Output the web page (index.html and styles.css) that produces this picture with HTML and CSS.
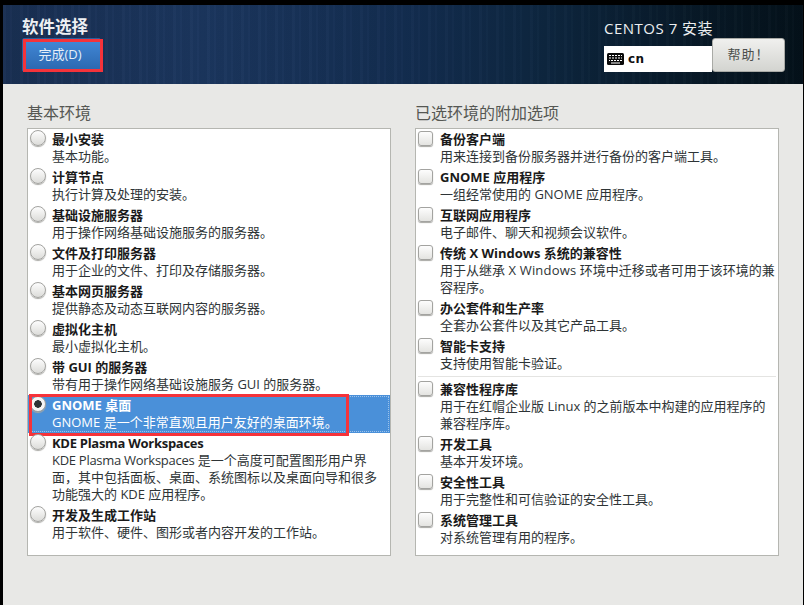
FILE: index.html
```html
<!DOCTYPE html>
<html lang="zh-CN">
<head>
<meta charset="utf-8">
<title>软件选择</title>
<link rel="stylesheet" href="styles.css">
</head>
<body>
<div class="frame">
  <header class="topbar">
    <div class="top-left">
      <h1 class="spoke-title">软件选择</h1>
      <div class="done-wrap">
        <button class="done">完成(D)</button>
        <span class="done-mark"></span>
      </div>
    </div>
    <div class="top-right">
      <div class="product">CENTOS 7 安装</div>
      <div class="top-controls">
        <div class="layout">
          <svg class="kbd" viewBox="0 0 17 12" width="17" height="12"><rect width="17" height="12" rx="1.5" fill="#0a0a0a"/><g fill="#fff"><rect x="2" y="2" width="2" height="1"/><rect x="5" y="2" width="2" height="1"/><rect x="8" y="2" width="2" height="1"/><rect x="11" y="2" width="2" height="1"/><rect x="14" y="2" width="1" height="1"/><rect x="2" y="4.5" width="2" height="1"/><rect x="5" y="4.5" width="2" height="1"/><rect x="8" y="4.5" width="2" height="1"/><rect x="11" y="4.5" width="2" height="1"/><rect x="14" y="4.5" width="1" height="1"/><rect x="2" y="7" width="1" height="1"/><rect x="4" y="7" width="2" height="1"/><rect x="7" y="7" width="2" height="1"/><rect x="10" y="7" width="2" height="1"/><rect x="13" y="7" width="2" height="1"/><rect x="4" y="9.5" width="9" height="1"/></g></svg>
          <span>cn</span>
        </div>
        <button class="help">帮助！</button>
      </div>
    </div>
  </header>
  <main class="content">
    <section class="column">
      <h2 class="col-title">基本环境</h2>
      <div class="panel">
        <div class="row"><span class="radio"></span><div class="text"><div class="name">最小安装</div><div class="desc">基本功能。</div></div></div>
        <div class="row"><span class="radio"></span><div class="text"><div class="name">计算节点</div><div class="desc">执行计算及处理的安装。</div></div></div>
        <div class="row"><span class="radio"></span><div class="text"><div class="name">基础设施服务器</div><div class="desc">用于操作网络基础设施服务的服务器。</div></div></div>
        <div class="row"><span class="radio"></span><div class="text"><div class="name">文件及打印服务器</div><div class="desc">用于企业的文件、打印及存储服务器。</div></div></div>
        <div class="row"><span class="radio"></span><div class="text"><div class="name">基本网页服务器</div><div class="desc">提供静态及动态互联网内容的服务器。</div></div></div>
        <div class="row"><span class="radio"></span><div class="text"><div class="name">虚拟化主机</div><div class="desc">最小虚拟化主机。</div></div></div>
        <div class="row"><span class="radio"></span><div class="text"><div class="name">带 GUI 的服务器</div><div class="desc">带有用于操作网络基础设施服务 GUI 的服务器。</div></div></div>
        <div class="row selected"><span class="radio checked"></span><div class="text"><div class="name">GNOME 桌面</div><div class="desc">GNOME 是一个非常直观且用户友好的桌面环境。</div></div><span class="focus-mark"></span></div>
        <div class="row"><span class="radio"></span><div class="text"><div class="name"><span class="tight">KDE Plasma Workspaces</span></div><div class="desc"><span class="tight">KDE Plasma Workspaces</span> 是一个高度可配置图形用户界<br>面，其中包括面板、桌面、系统图标以及桌面向导和很多<br>功能强大的 KDE 应用程序。</div></div></div>
        <div class="row"><span class="radio"></span><div class="text"><div class="name">开发及生成工作站</div><div class="desc">用于软件、硬件、图形或者内容开发的工作站。</div></div></div>
      </div>
    </section>
    <section class="column">
      <h2 class="col-title">已选环境的附加选项</h2>
      <div class="panel">
        <div class="row"><span class="check"></span><div class="text"><div class="name">备份客户端</div><div class="desc">用来连接到备份服务器并进行备份的客户端工具。</div></div></div>
        <div class="row"><span class="check"></span><div class="text"><div class="name">GNOME 应用程序</div><div class="desc">一组经常使用的 GNOME 应用程序。</div></div></div>
        <div class="row"><span class="check"></span><div class="text"><div class="name">互联网应用程序</div><div class="desc">电子邮件、聊天和视频会议软件。</div></div></div>
        <div class="row"><span class="check"></span><div class="text"><div class="name">传统 X Windows 系统的兼容性</div><div class="desc">用于从继承 <span class="loose">X Windows</span> 环境中迁移或者可用于该环境的兼<br>容程序。</div></div></div>
        <div class="row"><span class="check"></span><div class="text"><div class="name">办公套件和生产率</div><div class="desc">全套办公套件以及其它产品工具。</div></div></div>
        <div class="row"><span class="check"></span><div class="text"><div class="name">智能卡支持</div><div class="desc">支持使用智能卡验证。</div></div></div>
        <hr class="sep">
        <div class="row"><span class="check"></span><div class="text"><div class="name">兼容性程序库</div><div class="desc">用于在红帽企业版 Linux 的之前版本中构建的应用程序的<br>兼容程序库。</div></div></div>
        <div class="row"><span class="check"></span><div class="text"><div class="name">开发工具</div><div class="desc">基本开发环境。</div></div></div>
        <div class="row"><span class="check"></span><div class="text"><div class="name">安全性工具</div><div class="desc">用于完整性和可信验证的安全性工具。</div></div></div>
        <div class="row"><span class="check"></span><div class="text"><div class="name">系统管理工具</div><div class="desc">对系统管理有用的程序。</div></div></div>
      </div>
    </section>
  </main>
</div>
</body>
</html>
```
FILE: styles.css
```css
* { box-sizing: border-box; }
html, body { margin: 0; height: 100%; background: #000; overflow: hidden; }
body { font-family: "Open Sans", "Noto Sans CJK SC", sans-serif; font-size: 13px; color: #2e3436; }
.frame { height: 605px; padding: 5px 1px 0 3px; display: flex; flex-direction: column; }
.topbar {
  height: 79px; flex: none; display: flex; justify-content: space-between;
  padding: 12px 0 0 19px;
  background:
    repeating-linear-gradient(90deg, rgba(255,255,255,0.014) 0 3px, rgba(0,0,0,0.025) 3px 7px, rgba(255,255,255,0.01) 7px 9px, rgba(0,0,0,0.03) 9px 17px),
    linear-gradient(90deg, #192f52 0%, #1b365e 25%, #132d50 50%, #0d263f 68%, #081a29 85%, #04111a 100%);
}
.spoke-title { margin: 0; font-size: 16.5px; font-weight: 700; line-height: 20px; color: #eef0f3; }
.done-wrap { position: relative; width: 81px; height: 34px; margin-top: 1px; }
.done {
  display: block; width: 79px; height: 34px; padding: 0 3px 3px 0;
  font: inherit; font-size: 13px; color: #e6eef7;
  border: 1px solid #2a5f9e; border-radius: 2px; background: linear-gradient(#4389d8, #2a67af);
}
.done-mark { position: absolute; left: 1px; top: 1px; width: 80px; height: 33px; border: 3px solid #f5333a; pointer-events: none; }
.top-right { width: 197px; margin: 1px 2px 0 0; display: flex; flex-direction: column; }
.product { font-size: 15px; line-height: 20px; color: #eceff1; letter-spacing: 0.5px; }
.top-controls { display: flex; align-items: flex-end; }
.layout { width: 108px; height: 26px; background: #fff; display: flex; align-items: center; gap: 4px; padding-left: 3px; font-family: "DejaVu Sans", sans-serif; font-size: 12px; font-weight: 700; color: #111; letter-spacing: 0.5px; }
.help {
  width: 73px; height: 34px; padding: 0 0 4px;
  font-family: "Noto Sans CJK TC", sans-serif; font-size: 13px; letter-spacing: 1px; color: #4c4f4c; border: 1px solid #a9aaa6; border-radius: 3px;
  background: linear-gradient(#f0f0ee, #d3d4d0);
}
.content { flex: 1; background: #e8e8e6; display: flex; padding: 0 0 0 24px; gap: 24px; }
.column { width: 364px; display: flex; flex-direction: column; }
.col-title { margin: 0; height: 44px; padding-top: 19px; font-size: 16px; font-weight: 400; line-height: 20px; color: #555753; }
.panel { height: 428px; background: #fff; border: 1px solid #b5b6b1; }
.row { display: flex; min-height: 38px; position: relative; padding-bottom: 2px; }
.radio {
  flex: none; width: 16px; height: 16px; margin: 1px 6px 0 2px; border-radius: 50%;
  border: 1px solid #a3a3a0; background: linear-gradient(#fdfdfd, #dcdcd9);
  box-shadow: 0 1px 1px #a8a8a4;
}
.check {
  flex: none; width: 15px; height: 15px; margin: 2px 7px 0 2px; border-radius: 3px;
  border: 1px solid #a3a3a0; background: linear-gradient(#fdfdfd, #e4e4e1);
  box-shadow: 0 1px 1px #a8a8a4;
}
.text { flex: 1; padding-top: 1px; white-space: nowrap; }
.name { font-weight: 700; font-size: 13px; line-height: 18px; color: #1a1a1a; }
.desc { font-size: 13px; line-height: 17px; color: #2e3436; }
.tight { letter-spacing: -0.28px; }
.loose { letter-spacing: 0.2px; }
.selected { background: #4a90d9; outline: 1px dotted rgba(255,255,255,0.45); outline-offset: -2px; }
.selected .name, .selected .desc { color: #fff; }
.radio.checked { background: radial-gradient(circle, #2e3436 0 3.5px, #f5f5f4 4px); }
.focus-mark { position: absolute; left: 1px; top: -1px; width: 320px; height: 42px; border: 3px solid #f5333a; pointer-events: none; }
.sep { border: 0; border-top: 1px solid #e4e4e2; margin: 2px 2px 2px; }
```
